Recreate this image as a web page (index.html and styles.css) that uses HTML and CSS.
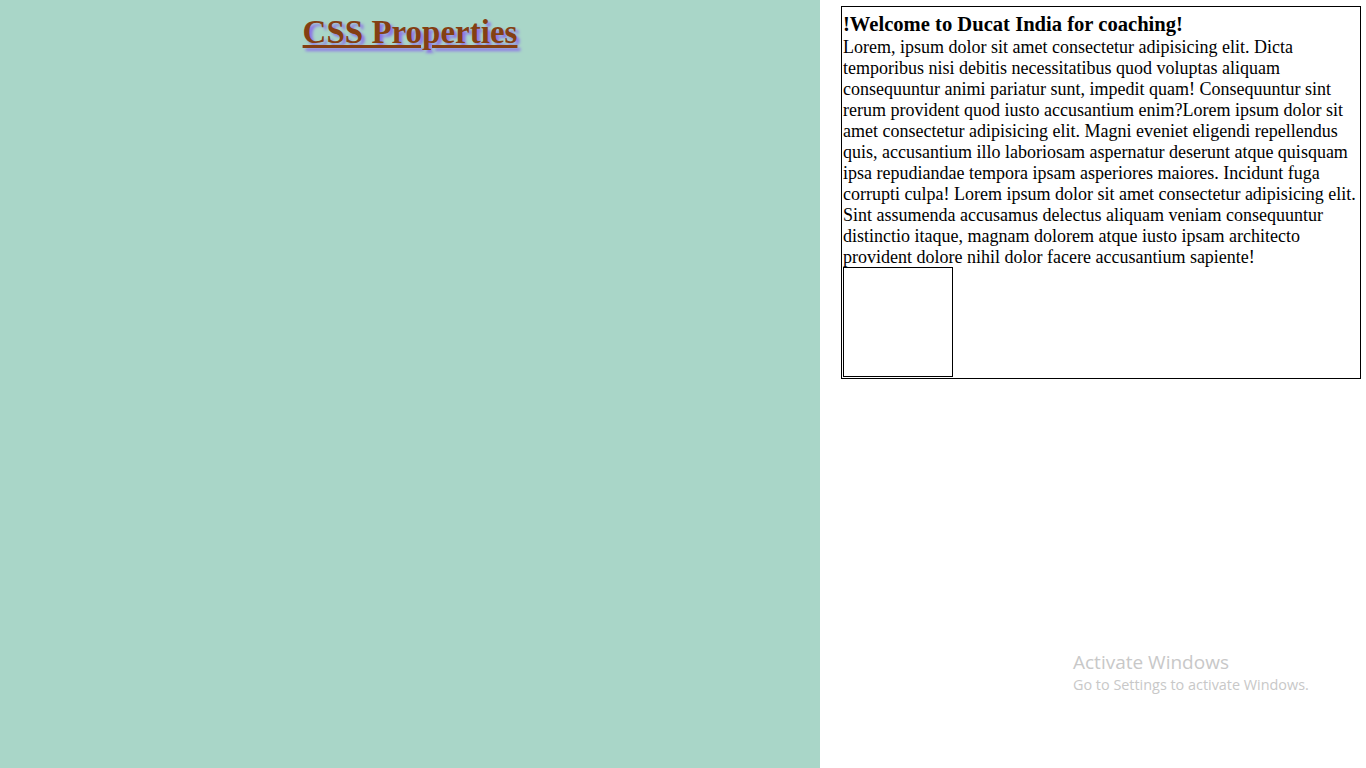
FILE: index.html
```html
<!DOCTYPE html>
<html>
<head>
<meta charset="utf-8">
<title>CSS Properties</title>
<link rel="stylesheet" href="styles.css">
</head>
<body>
<div class="page">
  <section class="left">
    <h1 class="title">CSS Properties</h1>
  </section>
  <section class="right">
    <div class="card">
      <h3 class="card-title">!Welcome to Ducat India for coaching!</h3>
      <p class="card-text">Lorem, ipsum dolor sit amet consectetur adipisicing elit. Dicta temporibus nisi debitis necessitatibus quod voluptas aliquam consequuntur animi pariatur sunt, impedit quam! Consequuntur sint rerum provident quod iusto accusantium enim?Lorem ipsum dolor sit amet consectetur adipisicing elit. Magni eveniet eligendi repellendus quis, accusantium illo laboriosam aspernatur deserunt atque quisquam ipsa repudiandae tempora ipsam asperiores maiores. Incidunt fuga corrupti culpa! Lorem ipsum dolor sit amet consectetur adipisicing elit. Sint assumenda accusamus delectus aliquam veniam consequuntur distinctio itaque, magnam dolorem atque iusto ipsam architecto provident dolore nihil dolor facere accusantium sapiente!</p>
      <div class="square"></div>
    </div>
  </section>
</div>
<div class="watermark">
  <div class="wm-title">Activate Windows</div>
  <div class="wm-sub">Go to Settings to activate Windows.</div>
</div>
</body>
</html>
```
FILE: styles.css
```css
html, body {
  margin: 0;
  padding: 0;
  height: 100%;
  background: #ffffff;
  font-family: "Liberation Serif", "Times New Roman", serif;
}
.page {
  display: flex;
  height: 768px;
}
.left {
  width: 820px;
  flex: none;
  background: #a9d6c8;
  text-align: center;
}
.title {
  margin: 13px 0 0;
  font-size: 33px;
  line-height: 38px;
  font-weight: bold;
  color: #843f12;
  text-decoration: underline;
  text-shadow: 3px 3px 3px #8c74e6;
}
.right {
  flex: 1;
  padding: 6px 5px 0 21px;
}
.card {
  border: 1px solid #000;
  padding: 1px;
}
.card-title {
  margin: 4px 0 0;
  font-size: 20.6px;
  font-weight: bold;
  line-height: 25px;
}
.card-text {
  margin: 0;
  font-size: 18px;
  line-height: 21px;
}
.square {
  width: 108px;
  height: 108px;
  margin-top: -1px;
  border: 1px solid #000;
}
.watermark {
  position: absolute;
  left: 1073px;
  top: 650px;
  font-family: "Open Sans", "Noto Sans", sans-serif;
  color: #c8c8c8;
}
.wm-title {
  font-size: 19px;
  line-height: 24px;
}
.wm-sub {
  font-size: 14.4px;
  line-height: 21px;
}
```
